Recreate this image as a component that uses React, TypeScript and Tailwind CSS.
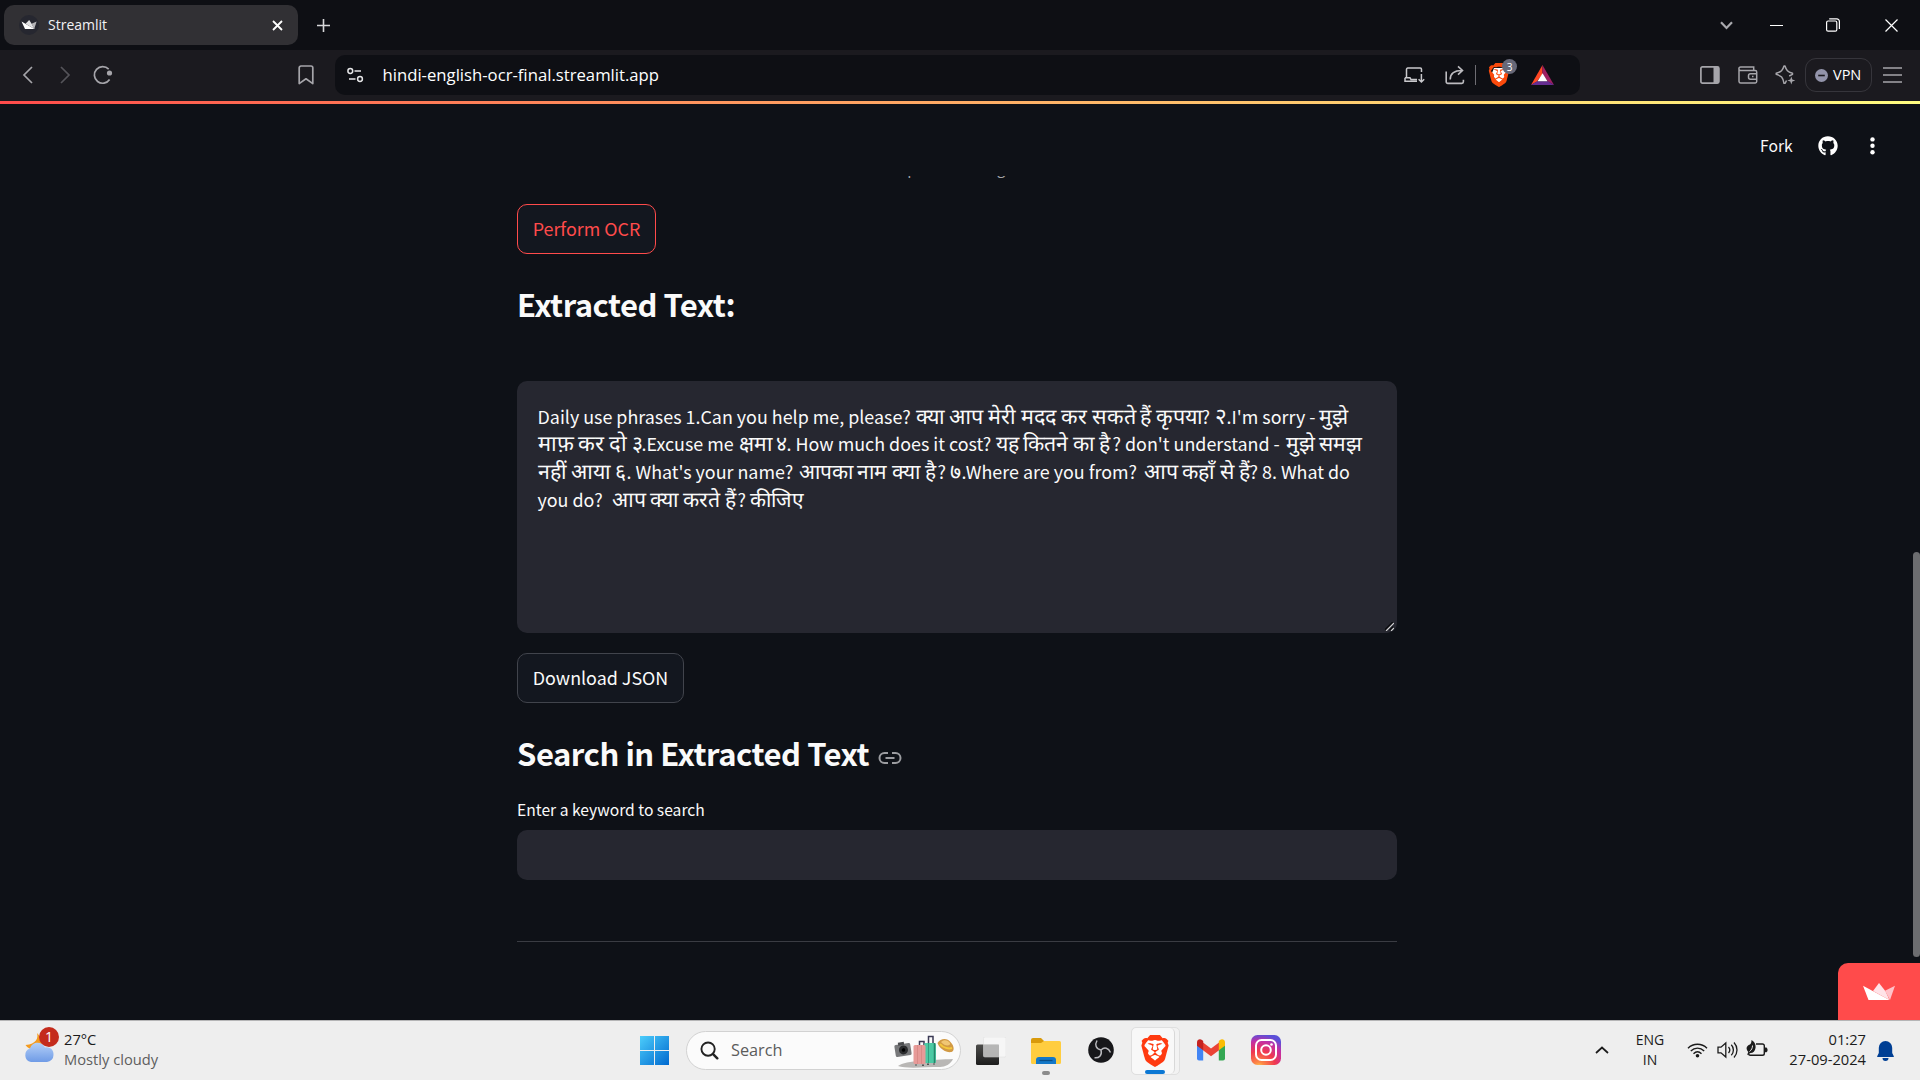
import React from "react";
import { FaGithub } from "react-icons/fa";
import { SiBrave } from "react-icons/si";

type Seg = { t: string; c: string };

const lines: Seg[][] = [
  [
    { t: "Daily use phrases 1.Can you help me, please?", c: "w-[378px]" },
    { t: "क्या आप मेरी मदद कर सकते हैं कृपया", c: "w-[286px] text-[21.5px]" },
    { t: "?", c: "w-[13px]" },
    { t: "२", c: "w-[12px] text-[22.5px]" },
    { t: ".I'm sorry -", c: "w-[92px]" },
    { t: "मुझे", c: "w-[35px] text-[21.3px]" },
  ],
  [
    { t: "माफ़ कर दो", c: "w-[94px] text-[21.9px]" },
    { t: "३", c: "w-[10px] text-[21.3px]" },
    { t: ".Excuse me", c: "w-[97px]" },
    { t: "क्षमा", c: "w-[37px] text-[21px]" },
    { t: "४", c: "w-[11px] text-[21.3px]" },
    { t: ". How much does it cost?", c: "w-[209px]" },
    { t: "यह कितने का है", c: "w-[117px] text-[21.2px]" },
    { t: "? don't understand -", c: "w-[173px]" },
    { t: "मुझे समझ", c: "w-[80px] text-[21px]" },
  ],
  [
    { t: "नहीं आया", c: "w-[77px] text-[21.3px]" },
    { t: "६", c: "w-[12px] text-[21.3px]" },
    { t: ". What's your name?", c: "w-[172px]" },
    { t: "आपका नाम क्या है", c: "w-[139px] text-[20.9px]" },
    { t: "?", c: "w-[12px]" },
    { t: "७", c: "w-[12px] text-[21.3px]" },
    { t: ".Where are you from?", c: "w-[182px]" },
    { t: "आप कहाँ से हैं", c: "w-[106px] text-[21.3px]" },
    { t: "? 8. What do", c: "w-[110px]" },
  ],
  [
    { t: "you do?", c: "w-[74px]" },
    { t: "आप क्या करते हैं", c: "w-[126px] text-[21.2px]" },
    { t: "?", c: "w-[12px]" },
    { t: "कीजिए", c: "w-[60px] text-[20.9px]" },
  ],
];

function Tab() {
  return (
    <div className="flex h-[50px] items-center bg-[#0e0f14] pl-1">
      <div className="flex h-10 w-[294px] items-center rounded-[10px] bg-[#313034]">
        <svg className="ml-[15px]" width="20" height="20" viewBox="0 0 20 20">
          <circle cx="10" cy="10" r="10" fill="#262730" />
          <path d="M2.5 6.5 6 14h9.5z" fill="#fff" />
          <path d="m6.5 8.8 3.7-3.8 2.6 3.9 2.7 5.1z" fill="#e2e2e4" />
          <path d="m12.6 8.8 5-2.2-2.4 7.4z" fill="#b5b5b8" />
        </svg>
        <span className="-mt-[2px] ml-[9px] w-[170px] text-[14px] text-[#f2f2f4]">Streamlit</span>
        <svg className="ml-[54px]" width="11" height="11" viewBox="0 0 11 11">
          <path d="M1 1l9 9M10 1l-9 9" stroke="#fff" strokeWidth="1.8" />
        </svg>
      </div>
      <svg className="ml-[18px]" width="15" height="15" viewBox="0 0 15 15">
        <path d="M7.5 1v13M1 7.5h13" stroke="#d8d8da" strokeWidth="1.6" />
      </svg>
      <div className="flex-1" />
      <svg className="mr-[37px]" width="13" height="9" viewBox="0 0 13 9">
        <path d="M1 1.3l5.5 5.7L12 1.3" fill="none" stroke="#a9a9ae" strokeWidth="2.2" />
      </svg>
      <svg className="mr-[43px]" width="13" height="13" viewBox="0 0 13 13">
        <path d="M0 6.5h13" stroke="#fff" strokeWidth="1" />
      </svg>
      <svg className="mr-[45px]" width="14" height="14" viewBox="0 0 14 14" fill="none" stroke="#fff" strokeWidth="1.2">
        <rect x="0.6" y="3" width="10.2" height="10.2" rx="1.5" />
        <path d="M3.2 .8h7.6a2.6 2.6 0 0 1 2.6 2.6v7.6" />
      </svg>
      <svg className="mr-[22px]" width="13" height="13" viewBox="0 0 13 13">
        <path d="M.5.5l12 12M12.5.5l-12 12" stroke="#fff" strokeWidth="1.2" />
      </svg>
    </div>
  );
}

function Toolbar() {
  return (
    <div className="flex h-[51px] items-center bg-[#1b1a1f] pb-px">
      <svg className="ml-[22px]" width="11" height="18" viewBox="0 0 11 18">
        <path d="M10 1L2 9l8 8" fill="none" stroke="#a6a5aa" strokeWidth="1.7" />
      </svg>
      <svg className="ml-[27px]" width="11" height="18" viewBox="0 0 11 18">
        <path d="M1 1l8 8-8 8" fill="none" stroke="#55545a" strokeWidth="1.7" />
      </svg>
      <svg className="ml-[22px]" width="20" height="20" viewBox="0 0 20 20">
        <path d="M15.7 4.2a8.3 8.3 0 1 0 .9 10.3" fill="none" stroke="#a6a5aa" strokeWidth="1.7" />
        <circle cx="16.5" cy="8" r="2.6" fill="#a6a5aa" />
      </svg>
      <svg className="ml-[185px]" width="16" height="20" viewBox="0 0 16 20">
        <path d="M3 1h10a1.8 1.8 0 0 1 1.8 1.8V18.6L8 13.8l-6.8 4.8V2.8A1.8 1.8 0 0 1 3 1z" fill="none" stroke="#a6a5aa" strokeWidth="1.7" strokeLinejoin="round" />
      </svg>
      <div className="ml-[21px] flex h-10 w-[1245px] items-center rounded-[10px] bg-[#0e0f14]">
        <svg className="ml-3" width="17" height="16" viewBox="0 0 17 16" fill="none" stroke="#e6e6e8" strokeWidth="1.5">
          <circle cx="3.3" cy="4" r="2.4" />
          <path d="M7.5 4H14M2 12h6.500" />
          <circle cx="13" cy="12" r="2.4" />
        </svg>
        <span className="-mt-px ml-[18.5px] text-[16.7px] text-white">hindi-english-ocr-final.streamlit.app</span>
        <div className="flex-1" />
        <svg width="21" height="17" viewBox="0 0 21 17" fill="none" stroke="#c9c9cc" strokeWidth="1.5">
          <path d="M2.5 10.500V2.300a1.200 1.200 0 0 1 1.200-1.200h12.600a1.200 1.200 0 0 1 1.200 1.200V5M1 10.800h5l1 1.800h6M1 10.800v3.500h12" />
          <path d="M17.400 7v8M14.600 12.200l2.800 2.800 2.800-2.800" />
        </svg>
        <svg className="ml-[20px]" width="20" height="20" viewBox="0 0 20 20" fill="none" stroke="#bdbcc0" strokeWidth="1.6">
          <path d="M1.200 6.500v10.300a1.600 1.600 0 0 0 1.600 1.600h14a1.600 1.600 0 0 0 1.600-1.600v-2M5.200 14.500c0-5.500 4-9 11.800-9M13 1.300l4.500 4.200-4.500 4.200" />
        </svg>
        <div className="ml-[10px] h-5 w-[1.5px] bg-[#6e6d73]" />
        <div className="relative ml-[13px] h-[26px] w-[21px]">
          <svg className="absolute left-[3px] top-[5px]" width="15" height="16" viewBox="0 0 15 16">
            <path d="M2 1h11l2 5-4 8-3.500 2L4 14 0 6z" fill="#fff" />
          </svg>
          <SiBrave className="absolute left-[-2px] top-[1px] h-6 w-6 text-[#fb4a0c]" />
          <span className="absolute left-[13px] top-[-3px] flex h-[15px] w-[15px] items-center justify-center rounded-full bg-[#676878] text-[10px] leading-none text-white">3</span>
        </div>
        <svg className="ml-[21px] mr-[26px]" width="23" height="20" viewBox="0 0 23 20">
          <path d="M11.500 0v9L6 16.500 0 20z" fill="#ff4724" />
          <path d="M11.500 0L23 20l-6-3.500L11.500 9z" fill="#9e1f63" />
          <path d="M0 20l6-3.800h11L23 20z" fill="#662d91" />
          <path d="M11.500 8.200l5 8h-10z" fill="#fff" />
        </svg>
      </div>
      <svg className="ml-[120px]" width="20" height="18" viewBox="0 0 20 18">
        <rect x="0.900" y="0.900" width="18" height="16.200" rx="1.500" fill="none" stroke="#a6a5aa" strokeWidth="1.700" />
        <path d="M13.500 1H19v16h-5.500z" fill="#a6a5aa" />
      </svg>
      <svg className="ml-[18px]" width="20" height="18" viewBox="0 0 20 18" fill="none" stroke="#a6a5aa" strokeWidth="1.500">
        <path d="M1 3V15.400A1.700 1.700 0 0 0 2.700 17h14.600a1.400 1.400 0 0 0 1.400-1.400V6a1.400 1.400 0 0 0-1.400-1.400H2.700A1.800 1.800 0 0 1 2.700 1h13v3.400" />
        <path d="M19 7.700h-6.500a2 2 0 0 0-2 2v1.600a2 2 0 0 0 2 2H19M14 10.500h1.500" />
      </svg>
      <svg className="ml-[17px]" width="21" height="20" viewBox="0 0 21 20" fill="none" stroke="#a6a5aa" strokeWidth="1.500">
        <path d="M11.500 15.500L10.200 18.300H9C7.700 12 6.500 11 1.200 9.300V8.200C6.500 6.700 7.600 5.500 9 1h1c1.400 4.500 2.500 5.700 7.500 7.200v1.100l-3.300 1.700" strokeLinejoin="round" />
        <path d="M16.300 11.500l1 3 3 1-3 1-1 3-1-3-3-1 3-1z" fill="#a6a5aa" stroke="none" />
      </svg>
      <div className="ml-[9px] flex h-[34px] w-[67px] items-center rounded-[11px] border border-[#36353b]">
        <svg className="ml-[9px]" width="13" height="13" viewBox="0 0 13 13">
          <circle cx="6.500" cy="6.500" r="6.500" fill="#9394aa" />
          <path d="M3.200 6.500h6.600" stroke="#1b1a1f" strokeWidth="1.600" />
        </svg>
        <span className="ml-[5px] text-[14.5px] text-white">VPN</span>
      </div>
      <svg className="ml-[11px]" width="19" height="16" viewBox="0 0 19 16">
        <path d="M0 1h19M0 8h19M0 15h19" stroke="#a6a5aa" strokeWidth="1.600" />
      </svg>
    </div>
  );
}

function Page() {
  return (
    <div className="relative h-[916px] overflow-hidden bg-[#0e1117] text-[#fafafa]">
      <div className="flex h-[72px] items-center pl-[1760px] pt-[12px] font-['Noto_Sans_CJK_SC',sans-serif]">
        <span className="w-[33px] whitespace-nowrap text-[15.7px]">Fork</span>
        <FaGithub className="ml-[25px] h-5 w-5 text-white" />
        <svg className="ml-[32px]" width="5" height="18" viewBox="0 0 5 18" fill="#fff">
          <circle cx="2.500" cy="2.400" r="2.200" />
          <circle cx="2.500" cy="8.800" r="2.200" />
          <circle cx="2.500" cy="15.300" r="2.200" />
        </svg>
      </div>
      <div className="ml-[517px] flex w-[880px] flex-col items-start font-['Noto_Sans_CJK_SC',sans-serif]">
        <div className="flex h-[28px] w-full items-start justify-center overflow-hidden">
          <span className="-mt-[21px] text-[15.3px] leading-[24px] text-[#a3a4a8]">Uploaded Image.</span>
        </div>
        <button className="h-[50px] w-[139px] whitespace-nowrap rounded-[10px] border border-[#ff4b4b] bg-[#13171f] pb-[2px] text-[17.9px] text-[#ff4b4b]">
          Perform OCR
        </button>
        <h3 className="mt-[26px] h-[48px] whitespace-nowrap text-[31px] font-bold leading-[48px] tracking-[-0.5px]">Extracted Text:</h3>
        <div className="relative mt-[53px] h-[252px] w-full rounded-[10px] bg-[#262730] pl-[20.5px] pt-[19px]">
          {lines.map((l, i) => (
            <div key={i} className="flex h-[28px] items-baseline whitespace-pre text-[17.9px] leading-[28px]">
              {l.map((s, j) => (
                <span key={j} className={"shrink-0 " + s.c}>
                  {s.t}
                </span>
              ))}
            </div>
          ))}
          <svg className="absolute bottom-[2px] right-[3px]" width="9" height="9" viewBox="0 0 9 9">
            <path d="M0 8.500L8.500 0M5 8.500L8.500 5" stroke="#0b0c10" strokeWidth="2.400" />
            <path d="M1 9L9 1M6 9l3-3" stroke="#d4d4d6" strokeWidth="1.200" />
          </svg>
        </div>
        <button className="mt-5 h-[50px] w-[167px] whitespace-nowrap rounded-[10px] border border-[#41444c] bg-[#13171f] pb-[2px] text-[17.9px]">
          Download JSON
        </button>
        <div className="mt-[28px] flex h-[48px] items-center">
          <h3 className="-mt-[4px] w-[352px] whitespace-nowrap text-[31px] font-bold leading-[48px] tracking-[-0.46px]">Search in Extracted Text</h3>
          <svg className="ml-[9px] mt-[6px]" width="24" height="14" viewBox="0 0 24 14" fill="none" stroke="#9b9ca0" strokeWidth="2">
            <path d="M10 2H6.500a5 5 0 0 0 0 10H10M14 2h3.500a5 5 0 0 1 0 10H14M7.500 7h9" />
          </svg>
        </div>
        <label className="mt-[16px] h-[30px] whitespace-nowrap text-[15.65px] leading-[30px]">Enter a keyword to search</label>
        <div className="mt-[5px] h-[50px] w-full rounded-[10px] bg-[#262730]" />
        <div className="mt-[61px] h-px w-full bg-[#3a3c43]" />
      </div>
      <div className="absolute right-0 top-[448px] h-[405px] w-[7px] rounded-full bg-[#6c6d70]" />
      <div className="absolute bottom-0 right-0 flex h-[57px] w-[82px] items-center justify-center rounded-tl-[10px] bg-[#ff4b4b]">
        <svg width="32" height="17" viewBox="0 0 32 17">
          <path d="M10 8L16 0l6.500 8.200L26.500 17z" fill="#ffe3e8" />
          <path d="M22 7.700L32 2.800 27 17z" fill="#ffc2c9" />
          <path d="M0 2.800L26.500 17H5.500z" fill="#fff" />
        </svg>
      </div>
    </div>
  );
}

function WeatherIcon() {
  return (
    <div className="relative ml-[24px] h-[37px] w-[36px]">
      <svg className="absolute left-0 top-0" width="36" height="37" viewBox="0 0 36 37">
        <defs>
          <linearGradient id="cloud" x1="0" y1="0" x2="0" y2="1">
            <stop offset="0" stopColor="#b4d0f8" />
            <stop offset="1" stopColor="#6f9be6" />
          </linearGradient>
        </defs>
        <path d="M13 6c1.500 5-.5 11-11.500 12C5 23 11 24 16 20c3-3 3-8-3-14z" fill="#f49b1f" />
        <path d="M8.500 35a7 7 0 0 1-1-13.500C9.500 14 20 14 22.500 20.500 28 19.500 31.500 23.500 31 28a7 7 0 0 1-6.500 7z" transform="translate(-1.500 0)" fill="url(#cloud)" />
      </svg>
      <span className="absolute left-[15px] top-0 flex h-5 w-5 items-center justify-center rounded-full bg-[#c42b1c] text-[14px] leading-none text-white">1</span>
    </div>
  );
}

function Luggage() {
  return (
    <svg width="60" height="34" viewBox="0 0 60 34">
      <path d="M4 31c8-6 35-6 55-7-2 5-8 8-13 8-15 0-34 2-42-1z" fill="#b9b7b5" />
      <g transform="rotate(-9 9 15)">
        <rect x="1" y="9" width="16" height="12" rx="1.500" fill="#77787a" />
        <rect x="5" y="7" width="6" height="3" fill="#4c4d4f" />
        <circle cx="9.500" cy="15" r="4.500" fill="#2a2b2d" />
        <circle cx="9.500" cy="15" r="1.800" fill="#000" />
      </g>
      <path d="M34.500 9V1.500h4.500V9M25.500 11V6.500h4.500V11" fill="none" stroke="#3b3a55" strokeWidth="1.500" />
      <rect x="30" y="8" width="12" height="20" rx="1.500" fill="#4cc9a4" />
      <path d="M34.500 8v20" stroke="#2f9f80" />
      <path d="M40.500 8v20" stroke="#258569" strokeWidth="1.500" />
      <rect x="19.500" y="10" width="12" height="19" rx="1.500" fill="#e79a98" />
      <path d="M23.500 10v19M27.500 10v19" stroke="#d98a87" />
      <path d="M43.500 8c3-5 10-5 13-1 4 4 4 9 1 10-5 1-12-3-14-9z" fill="#d29a45" />
      <path d="M47 7c3-3 7-2 9 1 1 3-5 4-9-1z" fill="#f1c774" />
      <path d="M46 9c3 4 9 5 12 4" fill="none" stroke="#f5c93c" strokeWidth="2" />
      <path d="M22 29.500v1M29 29.500v1.500M34 28.500v1.500M40 28.500v1" stroke="#333" strokeWidth="1.500" />
    </svg>
  );
}

function Taskbar() {
  return (
    <div className="flex h-[60px] items-center border-t border-[#b5b5b6] bg-[#eeeeee] text-[#1b1b1b]">
      <div className="-mt-[10px]"><WeatherIcon /></div>
      <div className="ml-1 w-[110px] whitespace-nowrap pb-[3px] text-[14.7px] leading-5">
        <div>27°C</div>
        <div className="text-[#5e5e5e]">Mostly cloudy</div>
      </div>
      <svg className="ml-[466px]" width="29" height="29" viewBox="0 0 29 29">
        <defs>
          <linearGradient id="win" x1="0" y1="0" x2="1" y2="1">
            <stop offset="0" stopColor="#4ccdfb" />
            <stop offset="1" stopColor="#0069cf" />
          </linearGradient>
        </defs>
        <path d="M0 0h14v14H0zM15 0h14v14H15zM0 15h14v14H0zM15 15h14v14H15z" fill="url(#win)" />
      </svg>
      <div className="ml-[17px] flex h-[39px] w-[275px] items-center rounded-full border border-[#d2d2d2] bg-[#fbfbfb]">
        <svg className="ml-[13px]" width="19" height="19" viewBox="0 0 20 20" fill="none" stroke="#222" strokeLinecap="round">
          <circle cx="8.500" cy="8.500" r="7" strokeWidth="2" />
          <path d="M13.800 13.800l4.400 4.400" strokeWidth="2.600" />
        </svg>
        <span className="ml-[12px] w-[142px] text-[16.3px] text-[#5c5c5c]">Search</span>
        <div className="ml-[21px] mt-[2px]"><Luggage /></div>
      </div>
      <svg className="ml-[15px]" width="30" height="28" viewBox="0 0 30 28">
        <defs>
          <linearGradient id="tv" x1="0" y1="0" x2="0" y2="1">
            <stop offset="0" stopColor="#4c4c4a" />
            <stop offset="1" stopColor="#1d1d1d" />
          </linearGradient>
        </defs>
        <rect x="0" y="7.500" width="23" height="20.500" rx="1.500" fill="url(#tv)" />
        <rect x="7.500" y="0" width="22.500" height="20" rx="1.500" fill="#f8f8f8" fillOpacity=".8" stroke="#dcdcdc" strokeWidth=".5" />
        <path d="M7.500 7.500H23V20H7.500z" fill="#aaa" fillOpacity=".7" />
      </svg>
      <div className="ml-[25px] flex flex-col items-center pt-[12px]">
        <svg width="30" height="27" viewBox="0 0 30 27">
          <path d="M0 2a2 2 0 0 1 2-2h8l3 3v4H0z" fill="#d99a0b" />
          <path d="M0 5h10l3-2h15.500A1.500 1.500 0 0 1 30 4.500v20a1.500 1.500 0 0 1-1.500 1.500h-27A1.500 1.500 0 0 1 0 24.500z" fill="#ffcd3f" />
          <path d="M5 26v-4a3 3 0 0 1 3-3h14a3 3 0 0 1 3 3v4z" fill="#1478c8" />
          <path d="M8.500 22.500h13" stroke="#0b4f88" strokeWidth="1.300" />
        </svg>
        <div className="mt-[6px] h-1 w-2 rounded-full bg-[#8b8b8b]" />
      </div>
      <svg className="-mt-[2px] ml-[27px]" width="26" height="26" viewBox="0 0 26 26">
        <circle cx="13" cy="13" r="12.800" fill="#17171a" />
        <g fill="none" stroke="#b9b9bd" strokeWidth="1.500">
          <path d="M13 13C8 12 6.500 8 9 3.500" />
          <path d="M13 13c3.500-3.500 7.500-2 9.500 2.500" />
          <path d="M13 13c1.300 5-1.500 8.200-6.500 7.800" />
        </g>
      </svg>
      <div className="ml-[17px] flex h-12 w-[49px] rounded-[5px] border border-[#dfdfdf] bg-[#f2f2f2]">
        <div className="flex w-[43px] flex-col items-center rounded-[5px] border-r border-[#d8d8d8] bg-[#f8f8f8] pl-[4px]">
          <div className="relative mt-[8px] h-[32px] w-[34px]">
            <svg className="absolute left-[8px] top-[4px]" width="18" height="23" viewBox="0 0 18 23">
              <path d="M2 1h14l2 8-4 9-5 4-5-4L0 9z" fill="#fff" />
            </svg>
            <SiBrave className="absolute left-[1px] top-[-1px] h-8 w-8 text-[#ff3a10]" />
          </div>
          <div className="mt-[3px] h-1 w-5 rounded-full bg-[#0c78d4]" />
        </div>
      </div>
      <svg className="-mt-px ml-[17px]" width="28" height="22" viewBox="0 0 28 22">
        <path d="M0 4h6.200v17.500H2A2 2 0 0 1 0 19.500z" fill="#4285f4" />
        <path d="M21.800 4H28v15.500a2 2 0 0 1-2 2h-4.200z" fill="#34a853" />
        <path d="M6 3.500l8 6 8-6v7.800l-8 6-8-6z" fill="#ea4335" />
        <path d="M0 3.500C0 .5 3 -.6 5 1l1.200 1v9.300L0 6.800z" fill="#c5221f" />
        <path d="M28 3.500c0-3-3-4.100-5-2.500l-1.200 1v9.300L28 6.800z" fill="#fbbc04" />
      </svg>
      <svg className="-mt-px ml-[26px]" width="30" height="30" viewBox="0 0 30 30">
        <defs>
          <radialGradient id="ig" cx=".27" cy="1.080" r="1.100">
            <stop offset="0" stopColor="#fd5" />
            <stop offset=".15" stopColor="#fd8b45" />
            <stop offset=".5" stopColor="#f0384f" />
            <stop offset=".8" stopColor="#c32fa5" />
            <stop offset="1" stopColor="#5b50d8" />
          </radialGradient>
        </defs>
        <rect width="30" height="30" rx="6.500" fill="url(#ig)" />
        <g fill="none" stroke="#fff" strokeWidth="2">
          <rect x="5" y="5" width="20" height="20" rx="5.500" />
          <circle cx="15" cy="15" r="4.800" />
        </g>
        <circle cx="20.500" cy="9.500" r="1.300" fill="#fff" />
      </svg>
      <div className="flex-1" />
      <svg className="-mt-[2px]" width="14" height="8" viewBox="0 0 14 8">
        <path d="M1 7l6-5.500L13 7" fill="none" stroke="#1b1b1b" strokeWidth="1.700" />
      </svg>
      <div className="ml-[24px] w-[34px] whitespace-nowrap pb-px text-center text-[14px] leading-5">
        <div>ENG</div>
        <div>IN</div>
      </div>
      <svg className="-mt-[2px] ml-[20px]" width="21" height="16" viewBox="0 0 21 16" fill="none" stroke="#1b1b1b" strokeWidth="1.400">
        <path d="M1 6.200c5.400-5.300 13.600-5.300 19 0M3.800 9c3.900-3.800 9.500-3.800 13.400 0M6.500 11.700c2.400-2.300 5.600-2.300 8 0" />
        <circle cx="10.500" cy="13.800" r="1.800" fill="#1b1b1b" stroke="none" />
      </svg>
      <svg className="-mt-px ml-[9px]" width="21" height="18" viewBox="0 0 21 18" fill="none" stroke="#1b1b1b" strokeWidth="1.300">
        <path d="M1 6.200h3L8.800 2v14L4 11.800H1zM11.500 6c1.500 1.700 1.500 4.300 0 6M14.300 3.800c2.800 3 2.800 7.400 0 10.400M17 1.500c4 4.300 4 10.700 0 15" />
      </svg>
      <svg className="-mt-[3px] ml-[8px]" width="22" height="18" viewBox="0 0 22 18">
        <path d="M10 4h6.500a1.800 1.800 0 0 1 1.800 1.800v7.600a1.800 1.800 0 0 1-1.800 1.800H4.300a1.800 1.800 0 0 1-1.800-1.200" fill="none" stroke="#1b1b1b" strokeWidth="1.400" />
        <path d="M19 7.500h1.500L21.500 9v2l-1 1.200H19z" fill="#1b1b1b" />
        <path d="M5.500 0c3 1.500 4.500 4.500 4 8-.3 3-2.500 5-5 5L1 15l1.300-3C-1 8 1 5.500 4 4.500 5 3.500 5.500 2 5.500 0z" fill="#1b1b1b" />
        <path d="M3.500 11.500c2-1.500 3-3.500 3-6" stroke="#eee" strokeWidth="1" fill="none" />
      </svg>
      <div className="ml-[13px] w-[85px] whitespace-nowrap pb-[3px] text-right text-[14.7px] leading-5">
        <div>01:27</div>
        <div>27-09-2024</div>
      </div>
      <svg className="ml-[11px] mr-[26px]" width="17" height="20" viewBox="0 0 17 20" fill="#003f94">
        <path d="M8.500 0a6.700 6.700 0 0 1 6.700 6.700V12l1.600 3.200v.8H.2v-.8L1.800 12V6.700A6.700 6.700 0 0 1 8.500 0zM5.500 17h6a3 3 0 0 1-6 0z" />
      </svg>
    </div>
  );
}

export default function App() {
  return (
    <div className="h-[1080px] w-[1920px] overflow-hidden bg-[#0e1117] font-['Open_Sans',sans-serif]">
      <Tab />
      <Toolbar />
      <div className="h-[3px] bg-gradient-to-r from-[#ff4b4b] to-[#fffd80]" />
      <Page />
      <Taskbar />
    </div>
  );
}
